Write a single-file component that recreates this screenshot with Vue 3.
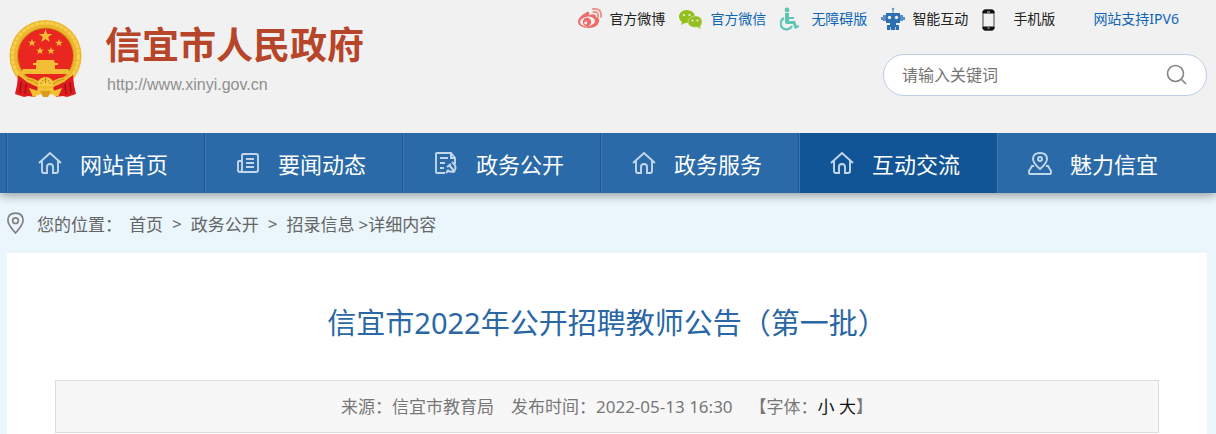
<script setup>
/**
 * Article page: site header, main navigation, breadcrumb and article head
 */
import { ref } from 'vue'

const keyword = ref('')

const quickLinks = [
  { text: '官方微博', icon: 'weibo' },
  { text: '官方微信', icon: 'wechat', blue: true },
  { text: '无障碍版', icon: 'access', blue: true },
  { text: '智能互动', icon: 'robot' },
  { text: '手机版', icon: 'phone' },
]

const navItems = [
  { text: '网站首页', icon: 'home' },
  { text: '要闻动态', icon: 'news' },
  { text: '政务公开', icon: 'doc' },
  { text: '政务服务', icon: 'home' },
  { text: '互动交流', icon: 'home', active: true },
  { text: '魅力信宜', icon: 'place' },
]
</script>

<template>
  <div class="page">
    <header class="header">
      <div class="container header-inner">
        <a class="logo" href="#">
          <svg class="emblem" viewBox="0 0 76 80" aria-hidden="true">
            <circle cx="38.500" cy="37" r="36" fill="#eeb62c" />
            <circle cx="38.500" cy="37" r="33" fill="none" stroke="#f7d050" stroke-width="3" stroke-dasharray="4 1" />
            <circle cx="38.500" cy="37" r="28.500" fill="#cf921b" />
            <circle cx="38.500" cy="37" r="27.500" fill="#e92620" />
            <g fill="#f3bd35">
              <path d="M38.500 10l1.700 5h5.100l-4.100 3.100 1.500 5-4.200-3-4.200 3 1.500-5-4.100-3.100h5.100z" />
              <path d="M25 20l1 2.700h2.900l-2.300 1.700.9 2.800-2.500-1.700-2.500 1.700.9-2.800-2.300-1.700H24z" />
              <path d="M52 20l1 2.700h2.900l-2.300 1.700.9 2.800-2.500-1.700-2.500 1.700.9-2.800-2.300-1.700H51z" />
              <path d="M33 28l1 2.700h2.900l-2.300 1.700.9 2.800-2.500-1.700-2.500 1.700.9-2.800-2.300-1.700H32z" />
              <path d="M44 28l1 2.700h2.900l-2.300 1.700.9 2.800-2.500-1.700-2.500 1.700.9-2.800-2.300-1.700H43z" />
              <path d="M30 41h17l1 3h3v2h-3v4h13l3 5H13l3-5h13v-4h-3v-2h3z" />
            </g>
            <path d="M11 56l4 3q7 6 16 9l-3 10-7-1-4 1-9-3 2-9zM66 56l-4 3q-7 6-16 9l3 10 7-1 4 1 9-3-2-9z" fill="#dc1c1e" />
            <path d="M14 63l-1 11M19 65l-1 10M58 65l1 10M63 63l1 11" stroke="#a80d12" stroke-width="1.500" />
            <path d="M15 58q10 0 16 4 3-4 7.500-4t7.500 4q6-4 16-4l-5 5q-8 1-11 6H31q-3-5-11-6z" fill="#f0bd30" />
            <path d="M20 60q7 1 12 6M57 60q-7 1-12 6" fill="none" stroke="#c98b16" />
            <path d="M31 67q0-8 7.500-8t7.500 8z" fill="#f7cb42" />
            <path d="M34 65q0-4 4.500-4t4.500 4M38.500 59v6" fill="none" stroke="#b87911" stroke-dasharray="2 1" />
            <path d="M22 69l9 3 4-3h7l4 3 9-3-4 9-7-3-5 3-5-3-8 3z" fill="#f3c233" />
            <path d="M33 72h11l-3 6h-5z" fill="#e0991f" />
          </svg>
          <span class="logo-text">
            <strong class="site-name">信宜市人民政府</strong>
            <span class="site-url">http://www.xinyi.gov.cn</span>
          </span>
        </a>

        <div class="tools">
          <nav class="quick" aria-label="快捷链接">
            <a v-for="link in quickLinks" :key="link.text" href="#" :class="{ blue: link.blue }">
              <svg v-if="link.icon === 'weibo'" viewBox="0 0 24 24" aria-hidden="true">
                <path d="M9 5Q12 4 11 8q7-2 7 2 4 1 3 5-2 6-11 6Q0 20 0 15 0 10 9 5z" fill="#ee6d68" />
                <ellipse cx="9.500" cy="14.500" rx="7.500" ry="4.800" fill="#f1f1f1" transform="rotate(-8 9.500 14.500)" />
                <circle cx="9" cy="15" r="4.200" fill="#ee6d68" />
                <circle cx="7.700" cy="16" r="1.400" fill="#f1f1f1" />
                <path d="M15.500 5q5-1 4.500 5M15 2q9-1 8 8" fill="none" stroke="#f08a80" stroke-width="1.800" stroke-linecap="round" />
              </svg>
              <svg v-else-if="link.icon === 'wechat'" viewBox="0 0 24 24" aria-hidden="true">
                <path d="M8 3C3 3 0 6 0 10q0 3 3 5l-1 3 4-2h4q6-1 6-6 0-6-8-7z" fill="#93c01f" />
                <path d="M16 9c5 0 7 3 7 6q0 3-2 4l1 3-4-2c-6 1-9-2-9-5s3-6 7-6z" fill="#93c01f" stroke="#d5e4ae" stroke-width=".6" />
                <g fill="#f1f1f1">
                  <circle cx="5" cy="8" r="1.100" />
                  <circle cx="10.500" cy="8" r="1.100" />
                  <circle cx="13.500" cy="13.500" r="1" />
                  <circle cx="18.500" cy="13.500" r="1" />
                </g>
              </svg>
              <svg v-else-if="link.icon === 'access'" viewBox="0 0 24 24" aria-hidden="true">
                <circle cx="7" cy="3" r="2.400" fill="#5cc6b3" />
                <path d="M5 6h4v4h5v2H9v2h6l2 5 2-1v2l-4 2-2-5H7q-2 0-2-2z" fill="#5cc6b3" />
                <path d="M4 11a6 6 0 1 0 8 8" fill="none" stroke="#5cc6b3" stroke-width="2.200" />
              </svg>
              <svg v-else-if="link.icon === 'robot'" viewBox="0 0 24 24" aria-hidden="true">
                <circle cx="12" cy="2" r="1.300" fill="#6d9ccb" />
                <path d="M11.500 3h1v3h-1zM0 10h2v3H0zM22 10h2v3h-2zM2 8h3v6H2zM19 8h3v6h-3z" fill="#5b8fc4" />
                <path d="M5 6h14v10H5zM9 16h6v2H9zM6 18h12v5H6z" fill="#2c70b3" />
                <circle cx="8.500" cy="10.500" r="1.700" fill="#f1f1f1" />
                <circle cx="15.500" cy="10.500" r="1.700" fill="#f1f1f1" />
                <path d="M9.500 20v3M14.500 20v3" stroke="#a9c5df" />
              </svg>
              <svg v-else viewBox="0 0 24 24" aria-hidden="true">
                <rect x="1" y="3" width="11" height="20" rx="2" fill="#f1f1f1" stroke="#444" />
                <path d="M1 6V5q0-2 2-2h7q2 0 2 2v1zM1 20v1q0 2 2 2h7q2 0 2-2v-1z" fill="#111" stroke="#111" />
                <path d="M5 5h3M5.500 21h2" stroke="#ddd" />
              </svg>
              {{ link.text }}
            </a>
            <a class="blue ipv6" href="#">网站支持IPV6</a>
          </nav>

          <form class="search" role="search" @submit.prevent>
            <input v-model="keyword" type="text" placeholder="请输入关键词" aria-label="请输入关键词" />
            <button type="submit" aria-label="搜索">
              <svg viewBox="0 0 22 22" aria-hidden="true">
                <circle cx="9.500" cy="9.500" r="8" />
                <path d="M15 15l5 5" />
              </svg>
            </button>
          </form>
        </div>
      </div>
    </header>

    <nav class="main-nav" aria-label="主导航">
      <div class="container nav-list">
        <a v-for="item in navItems" :key="item.text" href="#" class="nav-item" :class="{ active: item.active }">
          <svg viewBox="0 0 24 24" aria-hidden="true">
            <path v-if="item.icon === 'home'" d="M1 12 12 2l11 10M4 10v10q0 2 2 2h3v-6q0-3 3-3t3 3v6h3q2 0 2-2V10" />
            <template v-else-if="item.icon === 'news'">
              <path d="M6 19V4q0-1 1-1h13q2 0 2 2v14q0 2-2 2H4q-2 0-2-2v-8q0-1 1-1h3" />
              <path d="M6 18q0 3-2 3M10 8h8M10 12h8M10 16h8" />
            </template>
            <template v-else-if="item.icon === 'doc'">
              <path d="M11 22H3q-1 0-1-1V3q0-1 1-1h14l4 5v6M17 2v5h4M6 7h8M6 12h5M6 17h4" />
              <path d="M13 16l4-3M15 14l6 7M18 11q6 5 2 9-4 2-7-1M12 22l3-3" stroke-width="2" />
            </template>
            <template v-else>
              <path d="M12 18Q5 12 5 8q0-6 7-6t7 6q0 4-7 10z" />
              <circle cx="12" cy="8" r="2" />
              <path d="M6 15H4l-3 5v2q0 1 1 1h20q1 0 1-1v-2l-3-5h-2" />
            </template>
          </svg>
          <span>{{ item.text }}</span>
        </a>
      </div>
    </nav>

    <main class="container">
      <nav class="crumbs" aria-label="您的位置">
        <svg viewBox="0 0 18 24" aria-hidden="true">
          <path d="M9 22Q1 13 1 9q0-8 8-8t8 8q0 4-8 13z" />
          <circle cx="9" cy="9" r="3" />
        </svg>
        <span class="crumbs-label">您的位置：</span>
        <a href="#">首页</a>
        <span class="sep">&gt;</span>
        <a href="#">政务公开</a>
        <span class="sep">&gt;</span>
        <a href="#">招录信息</a>
        <span class="last">&gt;详细内容</span>
      </nav>

      <article class="article">
        <h1>信宜市2022年公开招聘教师公告（第一批）</h1>
        <div class="meta">
          <span>来源：信宜市教育局</span>
          <span>发布时间：2022-05-13 16:30</span>
          <span>【字体：<button type="button">小</button> <button type="button">大</button>】</span>
        </div>
      </article>
    </main>
  </div>
</template>

<style>
body {
  margin: 0;
  background: #eaf5fc;
}
</style>

<style scoped>
.page {
  font-family: "Noto Sans", "Noto Sans CJK SC", sans-serif;
  color: #666;
}

a {
  color: inherit;
  text-decoration: none;
}

.container {
  max-width: 1200px;
  margin: 0 9px 0 7px;
}

.header {
  position: relative;
  z-index: 1;
  background: #f1f1f1;
}

.header-inner {
  display: flex;
  justify-content: space-between;
  height: 133px;
}

.logo {
  display: flex;
  align-items: flex-start;
  gap: 22px;
  padding-top: 19px;
}

.emblem {
  width: 76px;
  height: 80px;
}

.logo-text {
  display: flex;
  flex-direction: column;
  padding-top: 4px;
}

.site-name {
  font-size: 37px;
  line-height: 44px;
  color: #b64529;
}

.site-url {
  padding: 8px 2px;
  font-family: "Liberation Sans", Arial, sans-serif;
  font-size: 16px;
  line-height: 20px;
  color: #8f8f8f;
}

.tools {
  display: flex;
  flex-direction: column;
  align-items: flex-end;
  gap: 23px;
  padding-top: 7px;
}

.quick {
  display: flex;
  gap: 14px;
  padding-right: 28px;
  font-size: 14px;
  line-height: 24px;
  color: #222;
}

.quick a {
  display: flex;
  align-items: center;
  gap: 7px;
  white-space: nowrap;
}

.quick svg {
  width: 24px;
  height: 24px;
}

.quick .blue {
  color: #0f65b5;
}

.quick .ipv6 {
  padding-left: 24px;
}

.search {
  display: flex;
  align-items: center;
  box-sizing: border-box;
  width: 324px;
  height: 42px;
  padding: 0 18px;
  border: 1px solid #bccde6;
  border-radius: 21px;
  background: #fff;
}

.search input {
  flex: 1;
  min-width: 0;
  padding: 0;
  border: 0;
  outline: 0;
  background: none;
  font: inherit;
  font-size: 16px;
}

.search input::placeholder {
  color: #757575;
}

.search button {
  display: flex;
  padding: 0;
  border: 0;
  background: none;
  cursor: pointer;
}

.search svg {
  width: 22px;
  height: 22px;
  fill: none;
  stroke: #858585;
  stroke-width: 1.6;
}

.main-nav {
  position: relative;
  background: #2a6aa8;
  box-shadow: 0 2px 10px rgba(0, 0, 0, 0.4);
}

.nav-list {
  display: flex;
}

.nav-item {
  display: flex;
  flex: 0 0 16.5%;
  align-items: center;
  gap: 18px;
  box-sizing: border-box;
  height: 60px;
  padding-left: 31px;
  box-shadow: -1px 0 #20588f, inset 1px 0 #3b78b3;
  font-size: 22px;
  color: #fff;
  white-space: nowrap;
}

.nav-item.active {
  background: #125596;
}

.nav-item svg {
  width: 24px;
  height: 24px;
  fill: none;
  stroke: #c4d7ea;
  stroke-width: 1.9;
}

.crumbs {
  display: flex;
  align-items: center;
  height: 60px;
  font-size: 17px;
}

.crumbs svg {
  width: 17px;
  height: 23px;
  fill: none;
  stroke: #808080;
  stroke-width: 1.8;
}

.crumbs-label {
  padding: 0 7px 0 13px;
}

.sep {
  padding: 0 9px;
}

.last {
  padding-left: 4px;
}

.article {
  padding: 48px 48px 1px;
  background: #fff;
}

h1 {
  margin: 0 0 35px;
  font-size: 29px;
  font-weight: 400;
  line-height: 44px;
  text-align: center;
  color: #2a67a5;
}

.meta {
  display: flex;
  justify-content: center;
  gap: 17px;
  border: 1px solid #ddd;
  background: #f7f7f7;
  font-size: 17px;
  line-height: 51px;
  color: #777;
}

.meta button {
  padding: 0;
  border: 0;
  background: none;
  font: inherit;
  color: #111;
  cursor: pointer;
}
</style>
